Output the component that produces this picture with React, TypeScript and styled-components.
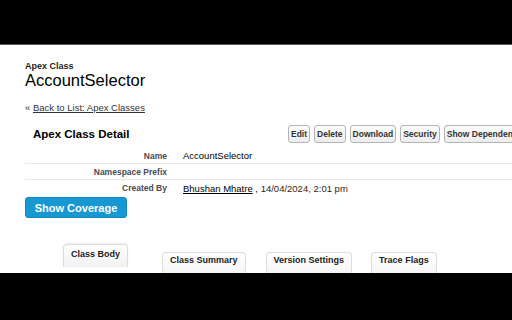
import styled, { createGlobalStyle } from "styled-components";

const Global = createGlobalStyle`
  html, body {
    margin: 0;
    padding: 0;
    background: #000;
    overflow: hidden;
  }
  body {
    font-family: Arial, "Liberation Sans", Helvetica, sans-serif;
    color: #000;
  }
`;

const Frame = styled.div`
  width: 512px;
  height: 320px;
  display: flex;
  flex-direction: column;
  background: #000;
`;

const Letterbox = styled.div<{ $h: number }>`
  height: ${({ $h }) => $h}px;
  flex: none;
  background: #000;
`;

const Screen = styled.div`
  height: 229px;
  flex: none;
  background: #fff;
  border-top: 1px solid #5a5a5a;
  overflow: hidden;
  padding: 16px 0 0 25px;
  box-sizing: border-box;
`;

const Header = styled.div`
  display: flex;
  flex-direction: column;
`;

const TypeLabel = styled.div`
  font-size: 9px;
  font-weight: bold;
  color: #1e1e1e;
  line-height: 11px;
`;

const PageTitle = styled.h1`
  margin: 0;
  font-size: 16.5px;
  font-weight: normal;
  line-height: 17px;
  color: #000;
`;

const BackRow = styled.div`
  margin-top: 13px;
  font-size: 9.5px;
  line-height: 12px;
  color: #333;
`;

const BackLink = styled.a`
  color: #333;
  text-decoration: underline;
`;

const Detail = styled.div`
  margin-top: 10px;
  width: 540px;
`;

const DetailHeader = styled.div`
  display: flex;
  align-items: center;
  height: 19px;
  margin-bottom: 5px;
`;

const DetailTitle = styled.h2`
  margin: 0 0 0 8px;
  width: 255px;
  font-size: 11.5px;
  font-weight: bold;
  color: #000;
`;

const Buttons = styled.div`
  display: flex;
  gap: 4px;
`;

const Btn = styled.button`
  height: 18px;
  padding: 0 2px;
  font-family: inherit;
  font-size: 8.5px;
  font-weight: bold;
  color: #333;
  background: linear-gradient(#fdfdfd, #ececec);
  border: 1px solid #b5b5b5;
  border-radius: 3px;
  white-space: nowrap;
`;

const Row = styled.div<{ $last?: boolean }>`
  display: flex;
  align-items: center;
  height: 16px;
  box-sizing: border-box;
  border-bottom: ${({ $last }) => ($last ? "none" : "1px solid #e8e8e8")};
  font-size: 9.5px;
`;

const Label = styled.div`
  width: 142px;
  padding-right: 16px;
  text-align: right;
  font-size: 8.5px;
  font-weight: bold;
  color: #4a4a56;
`;

const Value = styled.div`
  color: #000;
  white-space: nowrap;
`;

const UserLink = styled.a`
  color: #000;
  text-decoration: underline;
`;

const DateText = styled.span`
  color: #3b1a10;
`;

const CoverageButton = styled.button`
  margin-top: 1px;
  width: 102px;
  height: 21px;
  padding: 0;
  font-family: inherit;
  font-size: 11px;
  font-weight: bold;
  color: #fff;
  background: #1798d3;
  border: 1px solid #1289c0;
  border-radius: 3px;
`;

const Tabs = styled.div`
  display: flex;
  align-items: flex-start;
  margin: 26px 0 0 38px;
`;

const Tab = styled.div<{ $active?: boolean; $gap: number }>`
  margin-left: ${({ $gap }) => $gap}px;
  margin-top: ${({ $active }) => ($active ? 0 : 8)}px;
  height: ${({ $active }) => ($active ? 23 : 30)}px;
  padding: ${({ $active }) => ($active ? "4px 7px 0" : "2px 7px 0")};
  box-sizing: border-box;
  font-size: 9px;
  font-weight: bold;
  color: #222;
  background: linear-gradient(#ffffff, #f1f1f1);
  border: 1px solid #dcdcdc;
  border-bottom: none;
  border-radius: 4px 4px 0 0;
  box-shadow: ${({ $active }) => ($active ? "0 -1px 2px rgba(0,0,0,0.08)" : "none")};
  white-space: nowrap;
`;

export default function App() {
  return (
    <>
      <Global />
      <Frame>
        <Letterbox $h={44} />
        <Screen>
          <Header>
            <TypeLabel>Apex Class</TypeLabel>
            <PageTitle>AccountSelector</PageTitle>
            <BackRow>
              « <BackLink>Back to List: Apex Classes</BackLink>
            </BackRow>
          </Header>

          <Detail>
            <DetailHeader>
              <DetailTitle>Apex Class Detail</DetailTitle>
              <Buttons>
                <Btn>Edit</Btn>
                <Btn>Delete</Btn>
                <Btn>Download</Btn>
                <Btn>Security</Btn>
                <Btn>Show Dependencies</Btn>
              </Buttons>
            </DetailHeader>
            <Row>
              <Label>Name</Label>
              <Value>AccountSelector</Value>
            </Row>
            <Row>
              <Label>Namespace Prefix</Label>
              <Value />
            </Row>
            <Row $last>
              <Label>Created By</Label>
              <Value>
                <UserLink>Bhushan Mhatre</UserLink> ,{"  "}
                <DateText>14/04/2024, 2:01 pm</DateText>
              </Value>
            </Row>
          </Detail>

          <CoverageButton>Show Coverage</CoverageButton>

          <Tabs>
            <Tab $active $gap={0}>Class Body</Tab>
            <Tab $gap={34}>Class Summary</Tab>
            <Tab $gap={20}>Version Settings</Tab>
            <Tab $gap={19}>Trace Flags</Tab>
          </Tabs>
        </Screen>
        <Letterbox $h={46} />
      </Frame>
    </>
  );
}
